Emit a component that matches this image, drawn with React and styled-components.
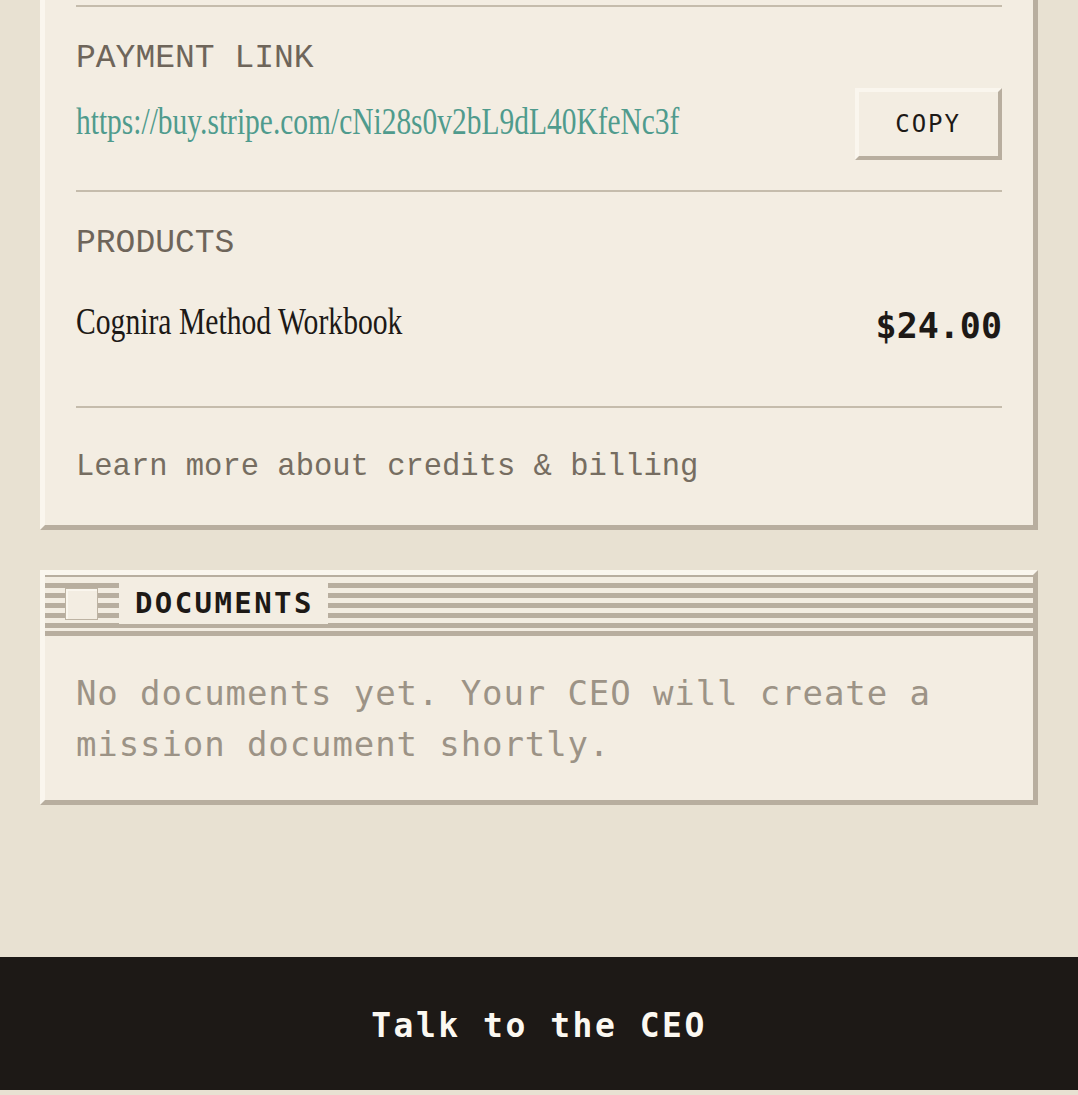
import styled, {createGlobalStyle} from "styled-components";

const LIGHT = "#f3ede2";
const HILITE = "#faf6ee";
const SHADE = "#b8ae9f";
const INK = "#1d1916";

const GlobalStyle = createGlobalStyle`
  html, body {
    margin: 0;
    padding: 0;
    background: #e8e1d2;
  }
  * { box-sizing: border-box; }
`;

const Page = styled.div`
  display: flex;
  flex-direction: column;
  padding-bottom: 5px;
`;

const Stack = styled.div`
  display: flex;
  flex-direction: column;
  gap: 40px;
  margin: 0 40px 152px;
`;

const Card = styled.div`
  background: ${LIGHT};
  border: 5px solid;
  border-color: ${HILITE} ${SHADE} ${SHADE} ${HILITE};
  border-top-width: ${({cut}) => (cut ? "0" : "5px")};
  padding: ${({flush}) => (flush ? "0" : "5px 31px 0")};
`;

const Section = styled.div`
  border-top: 2px solid #c5bcac;
  padding: ${({pad}) => pad || "33px 0 30px"};
`;

const Label = styled.div`
  font-family: "Liberation Mono", monospace;
  font-size: 33px;
  line-height: 38px;
  color: #6e655a;
  margin-bottom: 10px;
`;

const LinkRow = styled.div`
  display: flex;
  align-items: center;
  justify-content: space-between;
`;

const LinkText = styled.a`
  flex: 1;
  min-width: 0;
  padding-bottom: 6px;
  font-family: "Liberation Serif", serif;
  font-size: 38.5px;
  line-height: 48px;
  color: #4f9b8d;
  text-decoration: none;
  white-space: nowrap;

  span {
    display: inline-block;
    transform: scaleX(0.765);
    transform-origin: left center;
  }
`;

const CopyButton = styled.button`
  flex: none;
  height: 72px;
  padding: 0 37px 0 36px;
  background: ${LIGHT};
  border: 4px solid;
  border-color: ${HILITE} ${SHADE} ${SHADE} ${HILITE};
  font-family: "DejaVu Sans Mono", monospace;
  font-size: 24px;
  letter-spacing: 2px;
  color: ${INK};
`;

const ProductRow = styled.div`
  display: flex;
  align-items: center;
  justify-content: space-between;
  padding: 22px 0 27px;
`;

const ProductName = styled.div`
  font-family: "Liberation Serif", serif;
  font-size: 38.5px;
  line-height: 52px;
  color: ${INK};
  white-space: nowrap;

  span {
    display: inline-block;
    transform: scaleX(0.77);
    transform-origin: left center;
  }
`;

const Price = styled.div`
  padding-top: 10px;
  font-family: "DejaVu Sans Mono", monospace;
  font-weight: bold;
  font-size: 35px;
  line-height: 42px;
  color: ${INK};
`;

const MoreLink = styled.a`
  display: block;
  font-family: "Liberation Mono", monospace;
  font-size: 30.5px;
  line-height: 36px;
  color: #766d61;
  text-decoration: none;
`;

const TitleBar = styled.div`
  display: flex;
  align-items: flex-start;
  gap: 21px;
  height: 61px;
  padding-left: 20px;
  background: linear-gradient(
    to bottom,
    ${SHADE} 0 2px, ${LIGHT} 2px 8px,
    ${SHADE} 8px 13px, ${LIGHT} 13px 18px,
    ${SHADE} 18px 23px, ${LIGHT} 23px 28px,
    ${SHADE} 28px 33px, ${LIGHT} 33px 38px,
    ${SHADE} 38px 43px, ${LIGHT} 43px 48px,
    ${SHADE} 48px 53px, ${LIGHT} 53px 56px,
    ${SHADE} 56px 61px
  );
`;

const CloseBox = styled.div`
  width: 33px;
  height: 32px;
  margin-top: 13px;
  background: ${LIGHT};
  border: 1px solid #bdb3a3;
  box-shadow: inset 2px 2px 0 ${HILITE};
`;

const TitleLabel = styled.div`
  height: 41px;
  margin-top: 8px;
  padding: 0 14px 0 16px;
  background: ${LIGHT};
  font-family: "DejaVu Sans Mono", monospace;
  font-weight: bold;
  font-size: 29px;
  line-height: 41px;
  letter-spacing: 2.4px;
  color: ${INK};
`;

const Body = styled.div`
  padding: 32px 31px 30px;
  font-family: "DejaVu Sans Mono", monospace;
  font-size: 34px;
  line-height: 51px;
  letter-spacing: 0.9px;
  color: #9c9386;
`;

const Footer = styled.button`
  height: 133px;
  width: 100%;
  padding-top: 4px;
  border: 0;
  background: ${INK};
  color: #fbf8f1;
  font-family: "DejaVu Sans Mono", monospace;
  font-weight: bold;
  font-size: 33px;
  letter-spacing: 2.5px;
`;

const App = () => {
    const link = "https://buy.stripe.com/cNi28s0v2bL9dL40KfeNc3f";

    return (
        <Page>
            <GlobalStyle/>
            <Stack>
                <Card cut>
                    <Section>
                        <Label>PAYMENT LINK</Label>
                        <LinkRow>
                            <LinkText href="#"><span>{link}</span></LinkText>
                            <CopyButton>COPY</CopyButton>
                        </LinkRow>
                    </Section>
                    <Section pad="33px 0 32px">
                        <Label>PRODUCTS</Label>
                        <ProductRow>
                            <ProductName><span>Cognira Method Workbook</span></ProductName>
                            <Price>$24.00</Price>
                        </ProductRow>
                    </Section>
                    <Section pad="41px 0 40px">
                        <MoreLink href="#">Learn more about credits &amp; billing</MoreLink>
                    </Section>
                </Card>
                <Card flush>
                    <TitleBar>
                        <CloseBox/>
                        <TitleLabel>DOCUMENTS</TitleLabel>
                    </TitleBar>
                    <Body>No documents yet. Your CEO will create a mission document shortly.</Body>
                </Card>
            </Stack>
            <Footer>Talk to the CEO</Footer>
        </Page>
    );
};

export default App;
